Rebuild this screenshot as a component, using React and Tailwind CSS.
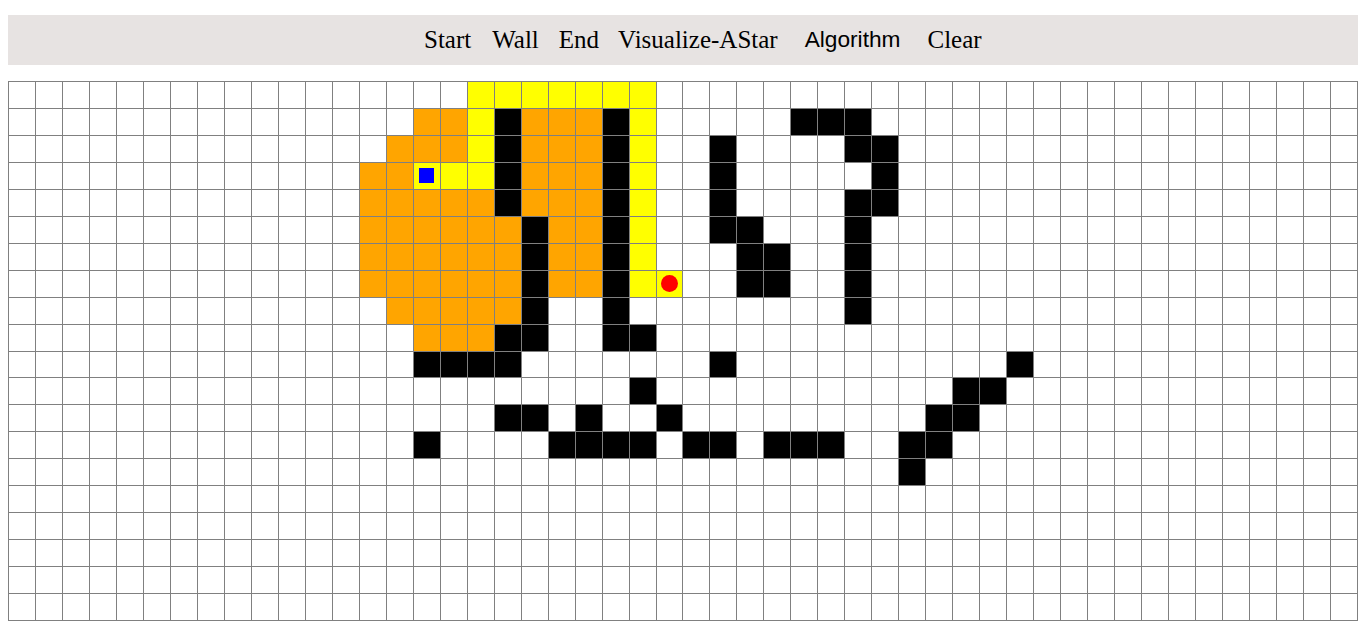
import React from "react";

const range = (a, b) => Array.from({ length: b - a + 1 }, (_, i) => a + i);

const WALLS = {
  1: [18, 22, 29, 30, 31],
  2: [18, 22, 26, 31, 32],
  3: [18, 22, 26, 32],
  4: [18, 22, 26, 31, 32],
  5: [19, 22, 26, 27, 31],
  6: [19, 22, 27, 28, 31],
  7: [19, 22, 27, 28, 31],
  8: [19, 22, 31],
  9: [18, 19, 22, 23],
  10: [15, 16, 17, 18, 26, 37],
  11: [23, 35, 36],
  12: [18, 19, 21, 24, 34, 35],
  13: [15, 20, 21, 22, 23, 25, 26, 28, 29, 30, 33, 34],
  14: [33],
};

const ORANGE = {
  1: [15, 16, 19, 20, 21],
  2: [14, 15, 16, 19, 20, 21],
  3: [13, 14, 19, 20, 21],
  4: [13, 14, 15, 16, 17, 19, 20, 21],
  5: [...range(13, 18), 20, 21],
  6: [...range(13, 18), 20, 21],
  7: [...range(13, 18), 20, 21],
  8: range(14, 18),
  9: [15, 16, 17],
};

const YELLOW = {
  0: range(17, 23),
  1: [17, 23],
  2: [17, 23],
  3: [15, 16, 17, 23],
  4: [23],
  5: [23],
  6: [23],
  7: [23, 24],
};

const START = [3, 15];
const END = [7, 24];

function cellClass(r, c) {
  if ((WALLS[r] || []).includes(c)) return "bg-black";
  if ((ORANGE[r] || []).includes(c)) return "bg-[#ffa500]";
  if ((YELLOW[r] || []).includes(c)) return "bg-[#ffff00]";
  return "bg-white";
}

export default function App() {
  const cells = [];
  for (let r = 0; r < 20; r++) {
    for (let c = 0; c < 50; c++) {
      const isStart = r === START[0] && c === START[1];
      const isEnd = r === END[0] && c === END[1];
      cells.push(
        <div
          key={`${r}-${c}`}
          className={`border-r border-b border-[#808080] flex items-center justify-center ${cellClass(r, c)}`}
        >
          {isStart && <div className="w-[15px] h-[15px] bg-[#0000ff]" />}
          {isEnd && <div className="w-[17px] h-[17px] rounded-full bg-[#ff0000]" />}
        </div>
      );
    }
  }

  const serif = "font-['Liberation_Serif','Times_New_Roman',serif] text-[25px] text-black";

  return (
    <div className="min-h-screen bg-white px-2 pt-[15px]">
      <div className="h-[50px] w-[1350px] bg-[#e7e3e2] flex items-center pb-[1px]">
        <span className={`${serif} ml-[416px]`}>Start</span>
        <span className={`${serif} ml-[21px]`}>Wall</span>
        <span className={`${serif} ml-[20px]`}>End</span>
        <span className={`${serif} ml-[19px]`}>Visualize-AStar</span>
        <span className="ml-[27px] font-['Liberation_Sans',Arial,sans-serif] text-[22.7px] text-black">
          Algorithm
        </span>
        <span className={`${serif} ml-[27px]`}>Clear</span>
      </div>
      <div className="mt-4 w-[1350px] h-[540px] border-l border-t border-[#808080] grid grid-cols-[repeat(50,minmax(0,1fr))] grid-rows-[repeat(20,minmax(0,1fr))]">
        {cells}
      </div>
    </div>
  );
}
